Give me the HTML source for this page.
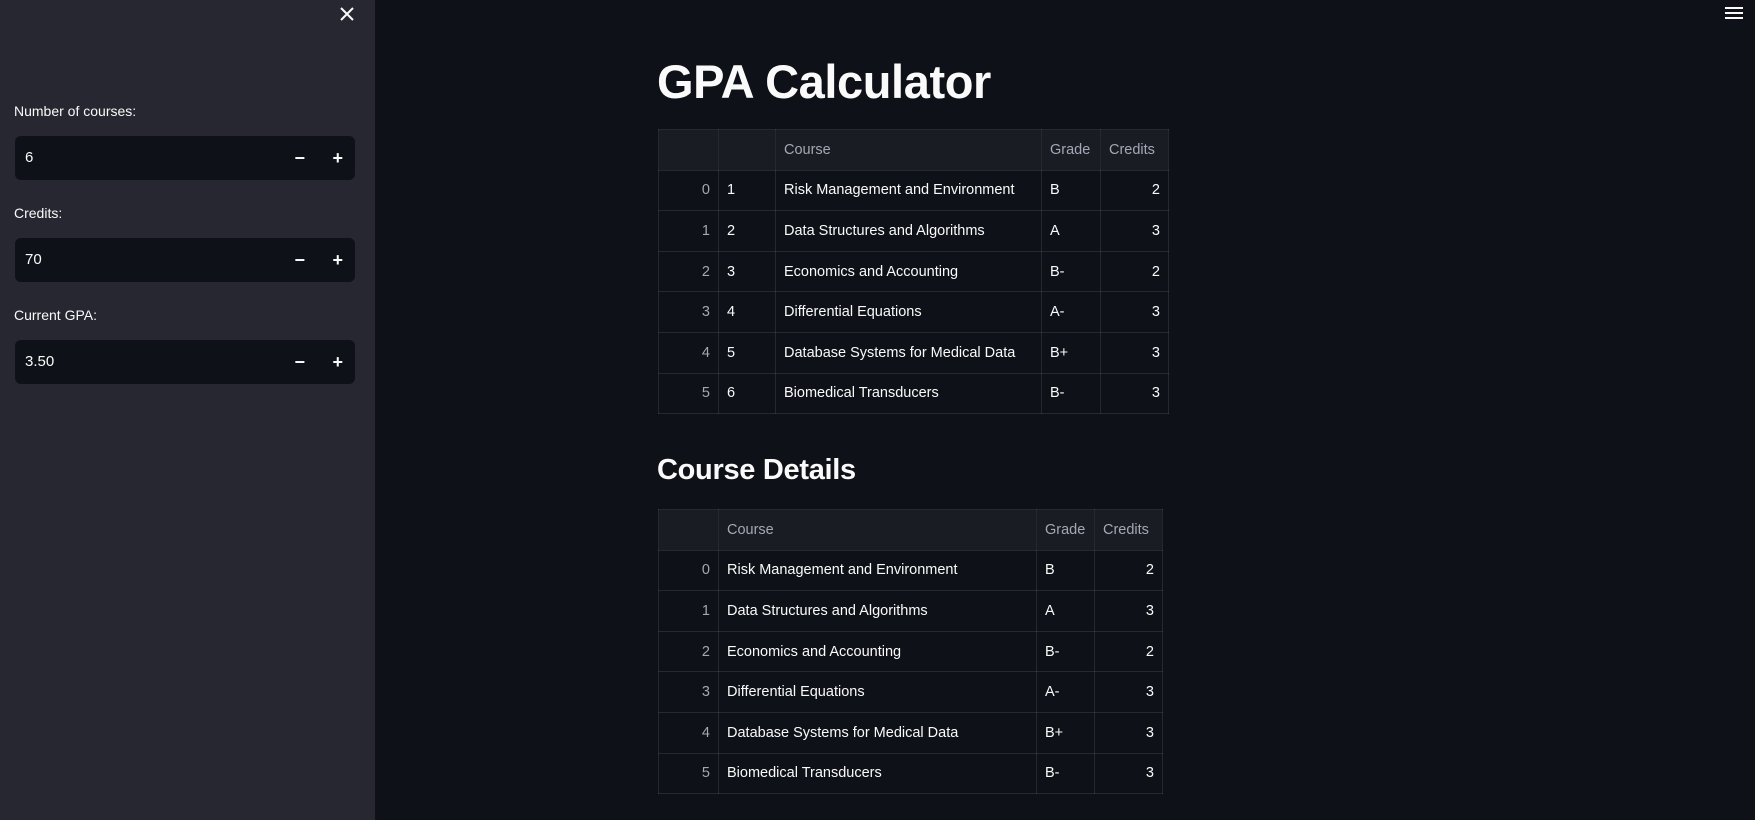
<!DOCTYPE html>
<html><head><style>
*{margin:0;padding:0;box-sizing:border-box}
body{width:1755px;height:820px;background:#0e1117;font-family:"Liberation Sans",sans-serif;color:#fafafa;position:relative;overflow:hidden}
.sb{position:absolute;left:0;top:0;width:375px;height:820px;background:#262730}
.lbl{position:absolute;left:14px;font-size:14px;color:#fafafa}
.inp{position:absolute;left:15px;width:340px;height:44px;background:#0e1117;border-radius:6px;font-size:15px;padding:0 10px;line-height:44px}
.inp .m{position:absolute;right:50px;top:0;font-size:18px;font-weight:bold}
.inp .p{position:absolute;right:12px;top:0;font-size:18px;font-weight:bold}
h1{position:absolute;left:657px;top:54px;font-size:47px;font-weight:bold;letter-spacing:-0.4px}
h2{position:absolute;left:657px;top:454px;font-size:29px;font-weight:bold;letter-spacing:-0.3px}
table{position:absolute;border-collapse:collapse;table-layout:fixed;font-size:14.5px;border:1px solid rgba(250,250,250,0.1)}
td,th{border:1px solid rgba(250,250,250,0.1);height:40.6px;padding:0 8px;white-space:nowrap;font-weight:normal;text-align:left;overflow:hidden}
th{background:#1a1c24;color:#a3a8b4}
td.i{color:#a3a8b4;text-align:right}
td.r{text-align:right}
</style></head><body>
<div class="sb">
<svg style="position:absolute;left:340px;top:7px" width="14" height="14" viewBox="0 0 14 14"><path d="M1 1L13 13M13 1L1 13" stroke="#fafafa" stroke-width="2"/></svg>
<div class="lbl" style="top:103px">Number of courses:</div>
<div class="inp" style="top:136px">6<span class="m">−</span><span class="p">+</span></div>
<div class="lbl" style="top:205px">Credits:</div>
<div class="inp" style="top:238px">70<span class="m">−</span><span class="p">+</span></div>
<div class="lbl" style="top:307px">Current GPA:</div>
<div class="inp" style="top:340px">3.50<span class="m">−</span><span class="p">+</span></div>
</div>
<svg style="position:absolute;left:1725px;top:6px" width="18" height="14" viewBox="0 0 18 14"><path d="M0 2H18M0 7H18M0 12H18" stroke="#fafafa" stroke-width="2"/></svg>
<h1>GPA Calculator</h1>
<table style="left:658px;top:129px;width:510px">
<colgroup><col style="width:60px"><col style="width:57px"><col style="width:266px"><col style="width:59px"><col style="width:68px"></colgroup>
<tr><th></th><th></th><th>Course</th><th>Grade</th><th>Credits</th></tr>
<tr><td class="i">0</td><td>1</td><td>Risk Management and Environment</td><td>B</td><td class="r">2</td></tr>
<tr><td class="i">1</td><td>2</td><td>Data Structures and Algorithms</td><td>A</td><td class="r">3</td></tr>
<tr><td class="i">2</td><td>3</td><td>Economics and Accounting</td><td>B-</td><td class="r">2</td></tr>
<tr><td class="i">3</td><td>4</td><td>Differential Equations</td><td>A-</td><td class="r">3</td></tr>
<tr><td class="i">4</td><td>5</td><td>Database Systems for Medical Data</td><td>B+</td><td class="r">3</td></tr>
<tr><td class="i">5</td><td>6</td><td>Biomedical Transducers</td><td>B-</td><td class="r">3</td></tr>
</table>
<h2>Course Details</h2>
<table style="left:658px;top:509px;width:504px">
<colgroup><col style="width:60px"><col style="width:318px"><col style="width:58px"><col style="width:68px"></colgroup>
<tr><th></th><th>Course</th><th>Grade</th><th>Credits</th></tr>
<tr><td class="i">0</td><td>Risk Management and Environment</td><td>B</td><td class="r">2</td></tr>
<tr><td class="i">1</td><td>Data Structures and Algorithms</td><td>A</td><td class="r">3</td></tr>
<tr><td class="i">2</td><td>Economics and Accounting</td><td>B-</td><td class="r">2</td></tr>
<tr><td class="i">3</td><td>Differential Equations</td><td>A-</td><td class="r">3</td></tr>
<tr><td class="i">4</td><td>Database Systems for Medical Data</td><td>B+</td><td class="r">3</td></tr>
<tr><td class="i">5</td><td>Biomedical Transducers</td><td>B-</td><td class="r">3</td></tr>
</table>
</body></html>
